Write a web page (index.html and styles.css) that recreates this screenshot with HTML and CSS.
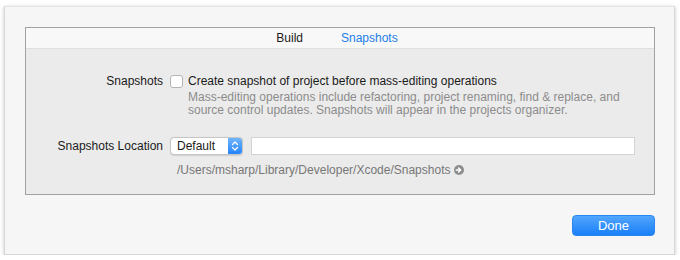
FILE: index.html
```html
<!DOCTYPE html>
<html>
<head>
<meta charset="utf-8">
<link rel="stylesheet" href="styles.css">
</head>
<body>
<div class="sheet">
  <div class="panel">
    <div class="tabs">
      <span class="tab">Build</span>
      <span class="tab active">Snapshots</span>
    </div>
    <div class="content">
      <div class="row row-check">
        <div class="label">Snapshots</div>
        <div class="control">
          <div class="check-line">
            <span class="checkbox"></span>
            <span class="check-text">Create snapshot of project before mass-editing operations</span>
          </div>
          <div class="desc">Mass-editing operations include refactoring, project renaming, find &amp; replace, and<br>source control updates. Snapshots will appear in the projects organizer.</div>
        </div>
      </div>
      <div class="row row-loc">
        <div class="label">Snapshots Location</div>
        <div class="control">
          <div class="loc-line">
            <div class="popup">
              <span class="popup-text">Default</span>
              <span class="popup-arrows">
                <svg width="8" height="12" viewBox="0 0 8 12"><path d="M1.5 4.5 L4 2 L6.5 4.5 M1.5 7.5 L4 10 L6.5 7.5" fill="none" stroke="#fff" stroke-width="1.3" stroke-linecap="round" stroke-linejoin="round"/></svg>
              </span>
            </div>
            <div class="field"></div>
          </div>
          <div class="path">/Users/msharp/Library/Developer/Xcode/Snapshots
            <svg class="goto" width="10" height="10" viewBox="0 0 10 10"><circle cx="5" cy="5" r="5" fill="#8c8c8c"/><path d="M2.3 5 H6.5 M4.6 3 L6.7 5 L4.6 7" fill="none" stroke="#fff" stroke-width="1.5" stroke-linecap="round" stroke-linejoin="round"/></svg>
          </div>
        </div>
      </div>
    </div>
  </div>
  <div class="footer">
    <button class="done">Done</button>
  </div>
</div>
</body>
</html>
```

FILE: styles.css
```css
html, body {
  margin: 0;
  padding: 0;
  background: #ffffff;
}
body {
  font-family: "Liberation Sans", Arial, sans-serif;
  font-size: 12px;
  color: #1a1a1a;
}
.sheet {
  box-sizing: border-box;
  margin: 6px 0 0 4px;
  width: 671px;
  height: 249px;
  background: #f6f6f6;
  border: 1px solid #d6d6d6;
  border-top-color: #e4e4e4;
  box-shadow: 0 1px 4px rgba(0,0,0,0.22);
  padding: 20px 19px 0 20px;
}
.panel {
  box-sizing: border-box;
  height: 168px;
  border: 1px solid #a2a2a2;
  background: #ebebeb;
  display: flex;
  flex-direction: column;
}
.tabs {
  height: 20px;
  background: #f8f8f8;
  border-bottom: 1px solid #e0e0e0;
  display: flex;
  justify-content: center;
  align-items: center;
  gap: 38px;
  padding-right: 6px;
}
.tab {
  font-size: 12px;
  color: #1a1a1a;
  line-height: 14px;
}
.tab.active {
  color: #1c7ee6;
}
.content {
  padding-top: 25px;
}
.row {
  display: flex;
}
.label {
  width: 144px;
  text-align: right;
  padding-right: 7px;
  box-sizing: border-box;
  line-height: 14px;
  flex: none;
}
.control {
  flex: 1;
}
.check-line {
  display: flex;
  align-items: center;
  height: 14px;
}
.checkbox {
  box-sizing: border-box;
  width: 13px;
  height: 13px;
  border: 1px solid #b4b4b4;
  border-radius: 3px;
  background: #ffffff;
  margin-left: 0;
  margin-right: 5px;
}
.check-text {
  line-height: 14px;
}
.desc {
  margin-top: 3px;
  margin-left: 18px;
  color: #8b8b8b;
  line-height: 13px;
}
.row-loc {
  margin-top: 20px;
}
.row-loc .label {
  line-height: 18px;
}
.loc-line {
  display: flex;
  align-items: center;
  height: 18px;
}
.popup {
  box-sizing: border-box;
  width: 73px;
  height: 18px;
  background: #ffffff;
  border: 1px solid #c6c6c6;
  border-radius: 4px;
  display: flex;
  overflow: hidden;
  box-shadow: 0 0.5px 1px rgba(0,0,0,0.12);
}
.popup-text {
  flex: 1;
  padding-left: 6px;
  line-height: 16px;
  color: #1a1a1a;
}
.popup-arrows {
  width: 14px;
  background: linear-gradient(#6fb5fb, #2584fa);
  display: flex;
  align-items: center;
  justify-content: center;
}
.field {
  box-sizing: border-box;
  margin-left: 8px;
  width: 384px;
  height: 18px;
  background: #ffffff;
  border: 1px solid #d3d3d3;
}
.path {
  margin-top: 8px;
  margin-left: 7px;
  color: #777777;
  line-height: 14px;
  display: flex;
  align-items: center;
  gap: 4px;
}
.goto {
  flex: none;
}
.footer {
  display: flex;
  justify-content: flex-end;
  padding-top: 20px;
}
.done {
  box-sizing: border-box;
  width: 83px;
  height: 21px;
  border: 1px solid #2a86f0;
  border-radius: 4px;
  background: linear-gradient(#52a6fd, #1a7ff8);
  color: #ffffff;
  font-family: "Liberation Sans", Arial, sans-serif;
  font-size: 13px;
  padding: 0;
  line-height: 19px;
}
```
